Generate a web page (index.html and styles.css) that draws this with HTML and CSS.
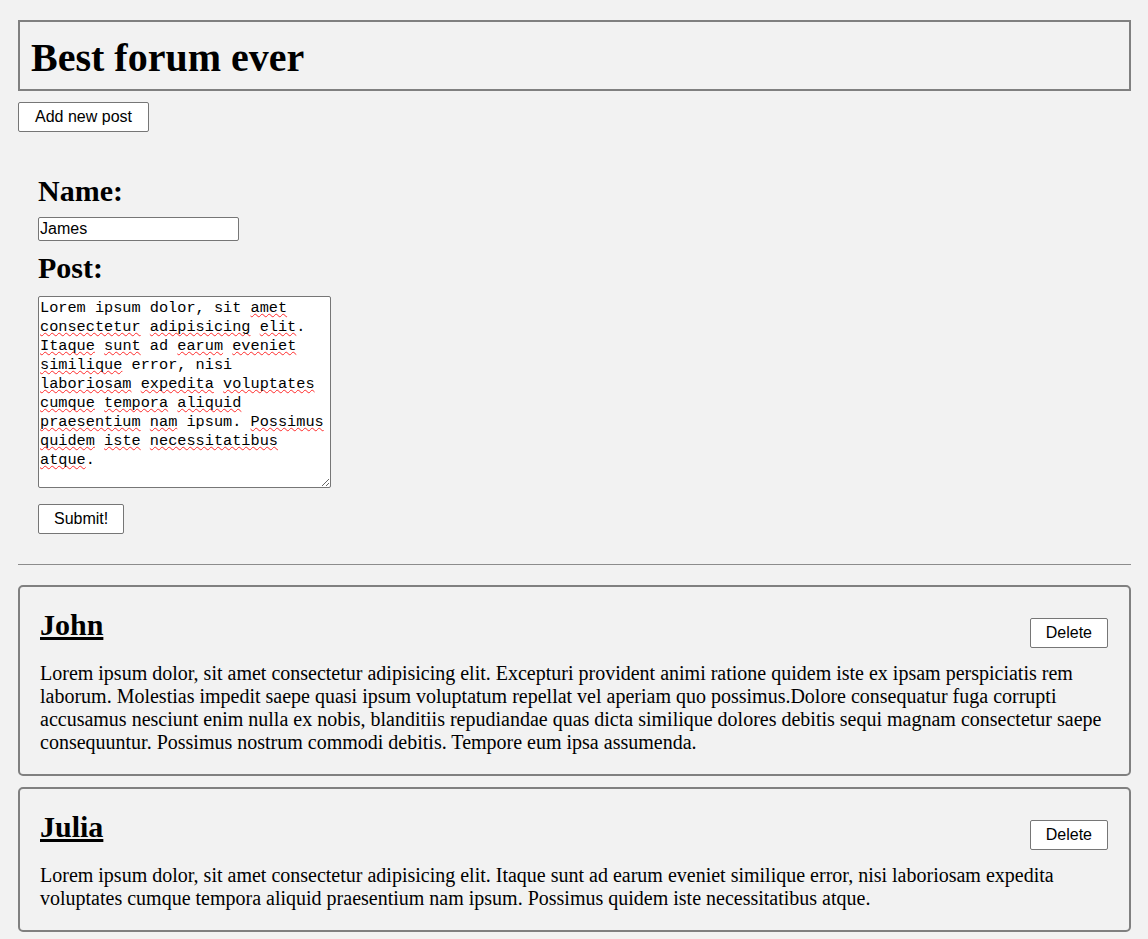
FILE: index.html
```html
<!DOCTYPE html>
<html lang="en">
<head>
<meta charset="utf-8">
<title>Best forum ever</title>
<link rel="stylesheet" href="styles.css">
</head>
<body>
<div class="page">
  <header class="banner">
    <h1 class="banner-title">Best forum ever</h1>
  </header>
  <button class="btn add-btn" type="button">Add new post</button>

  <form class="composer">
    <label class="field-label" for="name">Name:</label>
    <input class="name-input" id="name" type="text" value="James">
    <label class="field-label post-label">Post:</label>
    <div class="post-input" role="textbox" aria-multiline="true">Lorem ipsum dolor, sit <span class="sp">amet</span> <span class="sp">consectetur</span> <span class="sp">adipisicing</span> <span class="sp">elit</span>. <span class="sp">Itaque</span> <span class="sp">sunt</span> ad <span class="sp">earum</span> <span class="sp">eveniet</span> <span class="sp">similique</span> error, nisi <span class="sp">laboriosam</span> <span class="sp">expedita</span> <span class="sp">voluptates</span> <span class="sp">cumque</span> <span class="sp">tempora</span> <span class="sp">aliquid</span> <span class="sp">praesentium</span> <span class="sp">nam</span> ipsum. <span class="sp">Possimus</span> <span class="sp">quidem</span> <span class="sp">iste</span> <span class="sp">necessitatibus</span> <span class="sp">atque</span>.</div>
    <button class="btn submit-btn" type="button">Submit!</button>
  </form>

  <hr class="divider">

  <article class="post">
    <div class="post-head">
      <h2 class="post-author">John</h2>
      <button class="btn delete-btn" type="button">Delete</button>
    </div>
    <p class="post-body">Lorem ipsum dolor, sit amet consectetur adipisicing elit. Excepturi provident animi ratione quidem iste ex ipsam perspiciatis rem laborum. Molestias impedit saepe quasi ipsum voluptatum repellat vel aperiam quo possimus.Dolore consequatur fuga corrupti accusamus nesciunt enim nulla ex nobis, blanditiis repudiandae quas dicta similique dolores debitis sequi magnam consectetur saepe consequuntur. Possimus nostrum commodi debitis. Tempore eum ipsa assumenda.</p>
  </article>

  <article class="post">
    <div class="post-head">
      <h2 class="post-author">Julia</h2>
      <button class="btn delete-btn" type="button">Delete</button>
    </div>
    <p class="post-body">Lorem ipsum dolor, sit amet consectetur adipisicing elit. Itaque sunt ad earum eveniet similique error, nisi laboriosam expedita voluptates cumque tempora aliquid praesentium nam ipsum. Possimus quidem iste necessitatibus atque.</p>
  </article>
</div>
</body>
</html>
```
FILE: styles.css
```css
html, body {
  margin: 0;
  padding: 0;
}

body {
  background: #f2f2f2;
  color: #000;
  font-family: "Liberation Serif", "Times New Roman", serif;
  font-size: 20px;
  line-height: 23px;
}

.page {
  padding: 20px 17px 8px 18px;
}

.banner {
  border: 2px solid #808080;
  padding: 13px 11px 8px;
}

.banner-title {
  margin: 0;
  font-size: 40px;
  font-weight: bold;
  line-height: 46px;
}

.btn {
  font-family: "Liberation Sans", Arial, sans-serif;
  font-size: 16px;
  line-height: 18px;
  color: #000;
  background: #fff;
  border: 1px solid #767676;
  border-radius: 2px;
  padding: 5px 15px;
  height: 30px;
  box-sizing: border-box;
  cursor: pointer;
}

.add-btn {
  display: block;
  margin-top: 11px;
  width: 131px;
}

.composer {
  margin: 42px 0 30px;
  padding-left: 20px;
}

.field-label {
  display: block;
  font-size: 30px;
  font-weight: bold;
  line-height: 34px;
  margin: 0 0 9px;
}

.post-label {
  margin: 10px 0 11px;
}

.name-input {
  display: block;
  box-sizing: border-box;
  width: 201px;
  height: 24px;
  margin: 0;
  padding: 1px 1px;
  border: 1px solid #767676;
  border-radius: 2px;
  background: #fff;
  font-family: "Liberation Sans", Arial, sans-serif;
  font-size: 16px;
  color: #000;
}

.post-input {
  box-sizing: border-box;
  width: 293px;
  height: 192px;
  padding: 2px 1px 2px 1px;
  border: 1px solid #767676;
  border-radius: 2px;
  background: #fff;
  font-family: "Liberation Mono", "DejaVu Sans Mono", monospace;
  font-size: 15.25px;
  line-height: 19px;
  white-space: pre-wrap;
  overflow: auto;
  resize: both;
}

.sp {
  text-decoration: underline wavy #ff2a2a;
  text-decoration-thickness: 1px;
  text-underline-offset: 1px;
  text-decoration-skip-ink: none;
}

.submit-btn {
  display: block;
  margin-top: 16px;
}

.divider {
  border: 0;
  border-top: 1px solid #8c8c8c;
  height: 0;
  margin: 0 0 20px;
}

.post {
  border: 2px solid #808080;
  border-radius: 5px;
  padding: 20px;
  margin-bottom: 11px;
}

.post-head {
  display: flex;
  justify-content: space-between;
  align-items: flex-start;
}

.post-author {
  margin: 0;
  font-size: 30px;
  font-weight: bold;
  line-height: 35px;
  text-decoration: underline;
}

.delete-btn {
  margin-top: 11px;
  margin-right: 1px;
}

.post-body {
  margin: 14px 0 0;
  line-height: 23px;
}
```
